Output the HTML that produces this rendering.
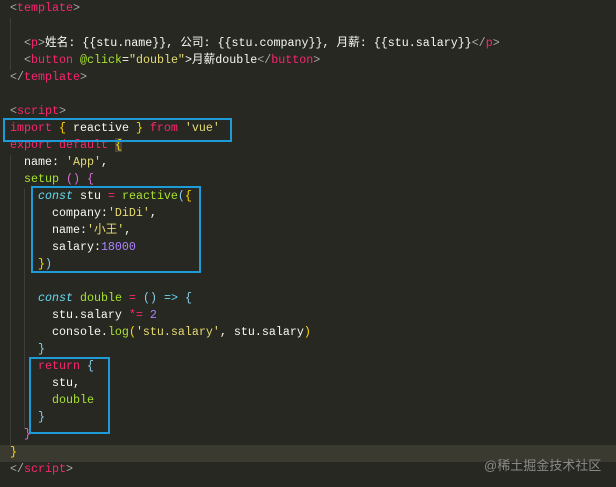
<!DOCTYPE html><html><head><meta charset="utf-8"><style>
body{margin:0;width:616px;height:487px;background:#272822;overflow:hidden;position:relative;font-family:"Liberation Mono","Noto Sans CJK SC",monospace;font-size:11.67px;color:#f8f8f2}
.l{position:absolute;left:10px;height:17px;line-height:17px;white-space:pre}
.t{color:#f92672}.s{color:#e6db74}.g{color:#a6e22e}.b{color:#66d9ef;font-style:italic}.p{color:#ae81ff}.y{color:#ffd700}.v{color:#da70d6}.c{color:#87ceeb}.gr{color:#aaa}
.box{position:absolute;border:2px solid #1e9bd7}
.hl{position:absolute;left:0;top:445px;width:616px;height:17px;background:#3b3a30}
.ig{position:absolute;width:1px;background:#3e3e38}
.wm{position:absolute;left:484px;top:455px;font-family:"Liberation Sans","Noto Sans CJK SC",sans-serif;font-size:13px;color:#8a8a88}
</style></head><body>
<div class="hl"></div>
<div class="ig" style="left:10px;top:18px;height:52px"></div>
<div class="ig" style="left:10px;top:155px;height:290px"></div>
<div class="ig" style="left:24px;top:189px;height:240px"></div>
<div class="l" style="top:0px"><span class="gr">&lt;</span><span class="t">template</span><span class="gr">&gt;</span></div>
<div class="l" style="top:35px">  <span class="gr">&lt;</span><span class="t">p</span><span class="gr">&gt;</span>姓名: {{stu.name}}, 公司: {{stu.company}}, 月薪: {{stu.salary}}<span class="gr">&lt;/</span><span class="t">p</span><span class="gr">&gt;</span></div>
<div class="l" style="top:52px">  <span class="gr">&lt;</span><span class="t">button</span> <span class="g">@click</span>=<span class="s">"double"</span>&gt;月薪double<span class="gr">&lt;/</span><span class="t">button</span><span class="gr">&gt;</span></div>
<div class="l" style="top:69px"><span class="gr">&lt;/</span><span class="t">template</span><span class="gr">&gt;</span></div>
<div class="l" style="top:103px"><span class="gr">&lt;</span><span class="t">script</span><span class="gr">&gt;</span></div>
<div class="l" style="top:120px"><span class="t">import</span> <span class="y">{</span> reactive <span class="y">}</span> <span class="t">from</span> <span class="s">'vue'</span></div>
<div class="l" style="top:137px"><span class="t">export default</span> <span class="y" style="background:#444">{</span></div>
<div class="l" style="top:154px">  name: <span class="s">'App'</span>,</div>
<div class="l" style="top:171px">  <span class="g">setup</span> <span class="v">()</span> <span class="v">{</span></div>
<div class="l" style="top:188px">    <span class="b">const</span> stu <span class="t">=</span> <span class="g">reactive</span><span class="c">(</span><span class="y">{</span></div>
<div class="l" style="top:205px">      company:<span class="s">'DiDi'</span>,</div>
<div class="l" style="top:222px">      name:<span class="s">'小王'</span>,</div>
<div class="l" style="top:239px">      salary:<span class="p">18000</span></div>
<div class="l" style="top:256px">    <span class="y">}</span><span class="c">)</span></div>
<div class="l" style="top:290px">    <span class="b">const</span> <span class="g">double</span> <span class="t">=</span> <span class="c">()</span> <span class="b">=&gt;</span> <span class="c">{</span></div>
<div class="l" style="top:307px">      stu.salary <span class="t">*=</span> <span class="p">2</span></div>
<div class="l" style="top:324px">      console.<span class="g">log</span><span class="y">(</span><span class="s">'stu.salary'</span>, stu.salary<span class="y">)</span></div>
<div class="l" style="top:341px">    <span class="c">}</span></div>
<div class="l" style="top:358px">    <span class="t">return</span> <span class="c">{</span></div>
<div class="l" style="top:375px">      stu,</div>
<div class="l" style="top:392px">      <span class="g">double</span></div>
<div class="l" style="top:409px">    <span class="c">}</span></div>
<div class="l" style="top:426px">  <span class="v">}</span></div>
<div class="l" style="top:444px"><span class="y">}</span></div>
<div class="l" style="top:461px"><span class="gr">&lt;/</span><span class="t">script</span><span class="gr">&gt;</span></div>
<div class="box" style="left:3px;top:118px;width:225px;height:20px"></div>
<div class="box" style="left:31px;top:186px;width:166px;height:83px"></div>
<div class="box" style="left:29px;top:357px;width:77px;height:73px"></div>
<div class="wm">@稀土掘金技术社区</div>
</body></html>
